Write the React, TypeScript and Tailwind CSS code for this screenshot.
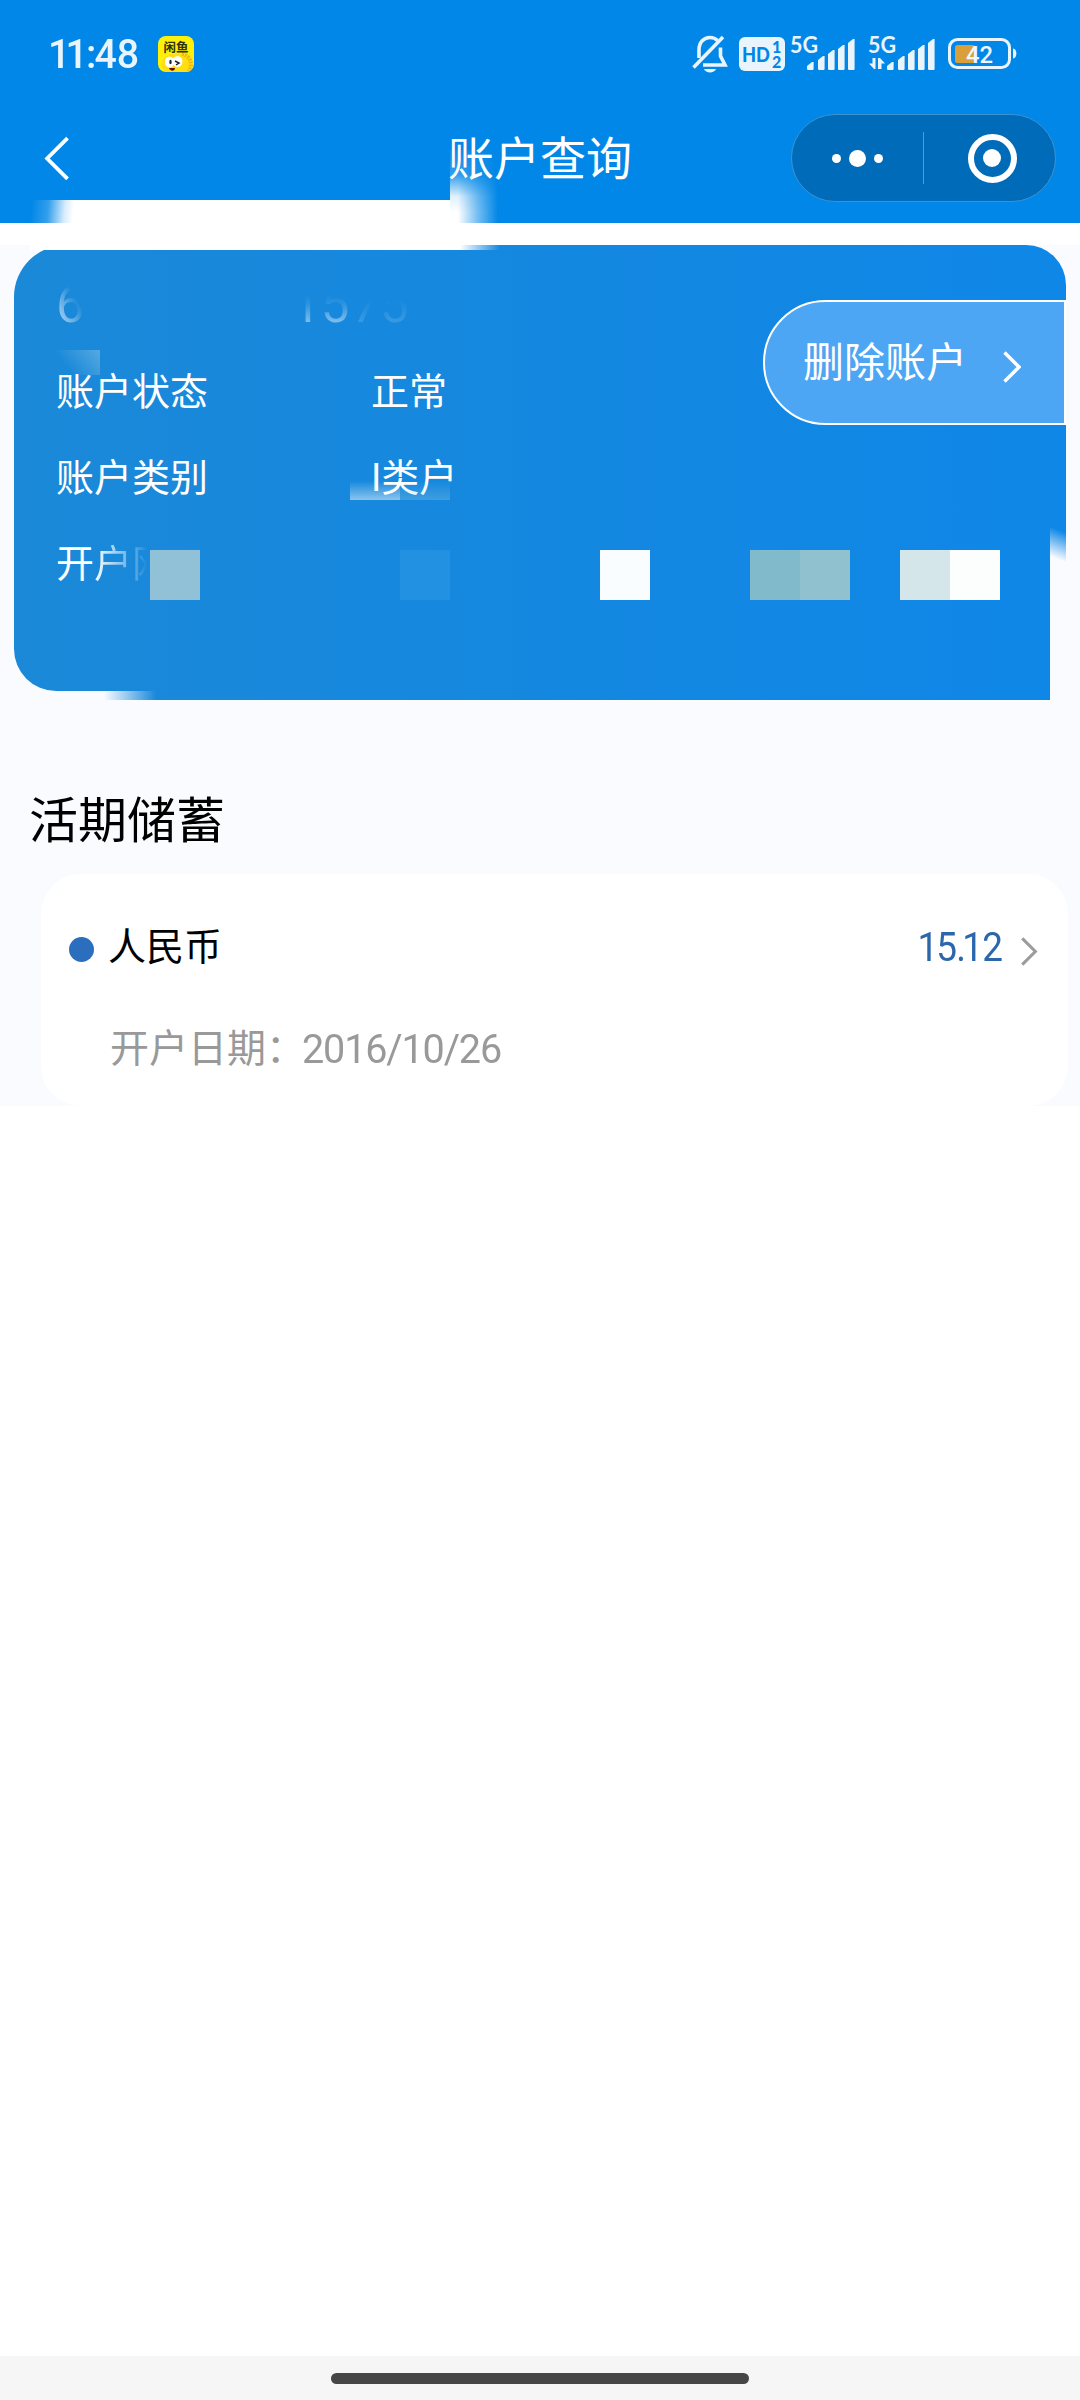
import type { ReactNode } from "react";

const infoRows = [
  { label: "账户状态", value: "正常" },
  { label: "账户类别", value: "I类户" },
];

const signalBars = [
  { x: 0, h: 8 },
  { x: 11, h: 14 },
  { x: 21, h: 20 },
  { x: 31, h: 25 },
  { x: 41, h: 31 },
];

function Chevron({ className, width = 3.4 }: { className: string; width?: number }) {
  return (
    <svg viewBox="0 0 18 32" className={className} fill="none" stroke="currentColor" strokeWidth={width}>
      <path d="M1.5 1.5 L16 16 L1.5 30.5" />
    </svg>
  );
}

function Signal({ arrows }: { arrows?: boolean }) {
  return (
    <svg width="66" height="36" viewBox="0 0 66 36" className="overflow-visible text-[#eaf4fd]" fill="currentColor">
      <text x="-1" y="17" fontSize="22" fontWeight="700" fontFamily="Lato" textLength="28" lengthAdjust="spacingAndGlyphs">
        5G
      </text>
      {arrows && (
        <path d="M3.5 22 h3 v11 h-1.5 L0 27.5 h3.5 Z M9 33 V22 h2 l5 5.5 h-3.5 V33 Z" />
      )}
      {signalBars.map((b) => (
        <path
          key={b.x}
          transform={`translate(${b.x + (arrows ? 18 : 16)} ${34 - b.h})`}
          d={`M0 4 L5 0 H6.6 V${b.h - 1} L6 ${b.h} H0.6 L0 ${b.h - 1} Z`}
        />
      ))}
    </svg>
  );
}

function BellOff() {
  return (
    <svg width="36" height="38" viewBox="0 0 36 38" fill="none" stroke="#eaf4fd" strokeWidth="3.6">
      <path d="M7 23 V15 C7 7 12 2.5 18 2.5 C21 2.5 23.5 3.5 25.5 5.5" />
      <path d="M28.5 12.5 V21 L33 30 H11" />
      <path d="M1.5 32.5 L31 2" />
      <path d="M12 34 H24 C22.5 38.500 13.500 38.500 12 34 Z" fill="#eaf4fd" stroke="none" />
    </svg>
  );
}

function AppBadge() {
  return (
    <svg width="36" height="36" viewBox="0 0 36 36">
      <defs>
        <clipPath id="badge">
          <rect width="36" height="36" rx="8" />
        </clipPath>
      </defs>
      <g clipPath="url(#badge)">
        <rect width="36" height="36" fill="#fdf10b" />
        <path d="M3 30 C3 21 12 16 22 18 C31 19 34 27 32 37 H8 Z" fill="#ffdf10" />
        <path d="M24 18 C34 20 35 30 30 37" fill="none" stroke="#f0b41c" strokeWidth="4" strokeDasharray="2 1" />
        <ellipse cx="11.500" cy="26" rx="4.700" ry="5.500" fill="#fff" />
        <ellipse cx="19.500" cy="25.500" rx="5" ry="5.500" fill="#fff" />
        <ellipse cx="12.500" cy="26" rx="1.200" ry="2.300" fill="#222" />
        <path d="M17 25 L21 27 L18 29" stroke="#222" strokeWidth="1.500" fill="none" />
        <path d="M11 32 H17 C17 35.500 12 35.500 11 32 Z" fill="#6b1008" />
        <text x="5.500" y="15.500" fontSize="12.500" fontWeight="700" fontFamily="Noto Sans CJK SC" fill="#30300c">
          闲鱼
        </text>
      </g>
    </svg>
  );
}

function Battery() {
  return (
    <svg width="70" height="32" viewBox="0 0 70 32">
      <rect x="1.500" y="1.500" width="60" height="28" rx="8" fill="none" stroke="#eaf4fd" strokeWidth="3" />
      <rect x="7" y="7" width="20" height="18" rx="2.500" fill="#d9a03a" />
      <path d="M65 10.500 C69.500 10.500 69.500 20.500 65 20.500 Z" fill="#eaf4fd" />
      <text x="18" y="24.500" fontSize="24" fontWeight="500" fontFamily="Roboto" fill="#eef7ff" textLength="27" lengthAdjust="spacingAndGlyphs">
        42
      </text>
    </svg>
  );
}

function StatusBar() {
  return (
    <div className="flex h-[108px] items-center justify-between pl-[48px] pr-[62px]">
      <div className="flex items-center gap-[20px]">
        <span className="w-[90px] whitespace-nowrap pt-[1px] text-[41px] leading-none font-medium text-[#eaf4fd]">
          <span className="inline-block origin-left scale-x-[0.96]">
            <span className="tracking-[-5px]">1</span>
            <span className="tracking-[-2px]">1:</span>
            <span className="tracking-[0px]">48</span>
          </span>
        </span>
        <AppBadge />
      </div>
      <div className="flex h-[38px] items-center">
        <BellOff />
        <svg width="46" height="34" viewBox="0 0 46 34" className="ml-[11px]">
          <rect width="46" height="34" rx="6" fill="#eaf4fd" />
          <g fill="#0187e7" fontFamily="Lato" fontWeight="900">
            <text x="3" y="24.500" fontSize="20" textLength="28" lengthAdjust="spacingAndGlyphs">HD</text>
            <text x="33" y="16" fontSize="16">1</text>
            <text x="33" y="30.500" fontSize="16">2</text>
          </g>
        </svg>
        <div className="ml-[6px] flex w-[157px] justify-between">
          <Signal />
          <div className="w-[79px]">
            <Signal arrows />
          </div>
        </div>
        <Battery />
      </div>
    </div>
  );
}

function Capsule() {
  return (
    <div className="-mt-px flex h-[88px] w-[265px] items-center rounded-full border border-[#3c93d2] bg-[#006bb8]">
      <div className="flex flex-1 items-center justify-center gap-[8px]">
        <i className="size-[9px] rounded-full bg-white" />
        <i className="size-[17px] rounded-full bg-white" />
        <i className="size-[9px] rounded-full bg-white" />
      </div>
      <div className="h-[52px] w-px bg-[#4b9bd4]" />
      <div className="flex flex-1 items-center justify-center">
        <div className="ml-[5px] flex size-[49px] items-center justify-center rounded-full border-[6px] border-white">
          <i className="size-[18px] rounded-full bg-white" />
        </div>
      </div>
    </div>
  );
}

function InfoRow({ label, children }: { label: ReactNode; children?: ReactNode }) {
  return (
    <div className="flex h-[86px] items-center pt-[2px] text-[38px] leading-none text-white">
      <span className="w-[315px]">{label}</span>
      <span>{children}</span>
    </div>
  );
}

// White smear running along the lower edge of the header
function HeaderSmear() {
  return (
    <svg width="540" height="83" className="absolute left-0 top-[140px]">
      <defs>
        <linearGradient id="smearL" x1="32" x2="74" y1="60" y2="64" gradientUnits="userSpaceOnUse">
          <stop offset="0" stopColor="#fff" stopOpacity="0" />
          <stop offset="0.400" stopColor="#fff" stopOpacity="0.200" />
          <stop offset="0.800" stopColor="#fff" stopOpacity="0.850" />
          <stop offset="1" stopColor="#fff" />
        </linearGradient>
        <linearGradient id="smearR" x1="458" x2="498" y1="0" y2="0" gradientUnits="userSpaceOnUse">
          <stop offset="0" stopColor="#fff" />
          <stop offset="0.500" stopColor="#fff" stopOpacity="0.450" />
          <stop offset="1" stopColor="#fff" stopOpacity="0" />
        </linearGradient>
        <linearGradient id="smearV" x1="0" x2="0" y1="10" y2="72" gradientUnits="userSpaceOnUse">
          <stop offset="0" stopColor="#fff" stopOpacity="0.050" />
          <stop offset="0.400" stopColor="#fff" stopOpacity="0.200" />
          <stop offset="0.750" stopColor="#fff" stopOpacity="0.880" />
          <stop offset="1" stopColor="#fff" />
        </linearGradient>
        <mask id="smearMask">
          <rect x="450" y="10" width="90" height="73" fill="url(#smearV)" />
        </mask>
      </defs>
      <rect x="0" y="60" width="450" height="23" fill="url(#smearL)" />
      <rect x="450" y="10" width="90" height="73" fill="url(#smearR)" mask="url(#smearMask)" />
    </svg>
  );
}

// Blurred and pixelated patches that hide the private part of the card
function CardPatches() {
  return (
    <svg width="1080" height="470" className="absolute left-0 top-0">
      <defs>
        <linearGradient id="p0" x1="460" x2="500" y1="0" y2="0" gradientUnits="userSpaceOnUse">
          <stop offset="0" stopColor="#fff" />
          <stop offset="1" stopColor="#fff" stopOpacity="0" />
        </linearGradient>
        <linearGradient id="p1" x1="72" x2="100" y1="128" y2="105" gradientUnits="userSpaceOnUse">
          <stop offset="0" stopColor="#9fd0e8" stopOpacity="0" />
          <stop offset="1" stopColor="#9fd0e8" stopOpacity="0.450" />
        </linearGradient>
        <linearGradient id="p2" x1="0" x2="0" y1="236" y2="255" gradientUnits="userSpaceOnUse">
          <stop offset="0" stopColor="#fff" stopOpacity="0" />
          <stop offset="1" stopColor="#fff" stopOpacity="0.500" />
        </linearGradient>
        <linearGradient id="p3" x1="0" x2="0" y1="236" y2="255" gradientUnits="userSpaceOnUse">
          <stop offset="0" stopColor="#9fd0e0" stopOpacity="0" />
          <stop offset="1" stopColor="#9fd0e0" stopOpacity="0.300" />
        </linearGradient>
        <linearGradient id="p4" x1="104" x2="156" y1="0" y2="0" gradientUnits="userSpaceOnUse">
          <stop offset="0" stopColor="#f9fbff" />
          <stop offset="1" stopColor="#f9fbff" stopOpacity="0" />
        </linearGradient>
        <linearGradient id="p5" x1="1062" x2="1052" y1="286" y2="312" gradientUnits="userSpaceOnUse">
          <stop offset="0" stopColor="#f9fbff" stopOpacity="0" />
          <stop offset="1" stopColor="#f9fbff" />
        </linearGradient>
      </defs>
      <rect x="30" y="0" width="480" height="5" fill="url(#p0)" />
      <path d="M57 105 H100 V130 H57 Z" fill="url(#p1)" />
      <rect x="350" y="236" width="50" height="19" fill="url(#p2)" />
      <rect x="400" y="236" width="50" height="19" fill="url(#p3)" />
      <g shapeRendering="crispEdges">
        <rect x="150" y="305" width="50" height="50" fill="#90c1d7" />
        <rect x="400" y="305" width="50" height="50" fill="#2391e2" />
        <rect x="600" y="305" width="50" height="50" fill="#fafdff" />
        <rect x="750" y="305" width="50" height="50" fill="#80bacb" />
        <rect x="800" y="305" width="50" height="50" fill="#8fc1cf" />
        <rect x="900" y="305" width="50" height="50" fill="#d5e6eb" />
        <rect x="950" y="305" width="50" height="50" fill="#fcfefe" />
      </g>
      <path d="M13 404 H14 A42 42 0 0 0 56 446 H100 V456 H13 Z" fill="#f9fbff" />
      <rect x="100" y="446" width="60" height="10" fill="url(#p4)" />
      <rect x="1050" y="275" width="18" height="182" fill="url(#p5)" />
    </svg>
  );
}

export default function App() {
  return (
    <div className="flex h-[2400px] w-[1080px] flex-col overflow-hidden bg-white font-['Roboto','Noto_Sans_CJK_SC',sans-serif]">
      {/* Header */}
      <header className="relative h-[223px] bg-[#0187e7]">
        <StatusBar />
        <div className="flex h-[101px] items-center pl-[44px] pr-[24px]">
          <div className="w-[404px]">
            <Chevron className="h-[45px] w-[26px] rotate-180 text-white" width={2.7} />
          </div>
          <h1 className="flex-1 text-[46px] leading-none text-white">账户查询</h1>
          <Capsule />
        </div>
        <HeaderSmear />
      </header>

      <main className="mt-[22px] h-[861px] bg-[#f9fbff]">
        {/* Account card */}
        <section className="relative h-[455px] pl-[14px]">
          <div className="flex h-[455px] w-[1052px] flex-col rounded-tl-[52px] rounded-tr-[40px] bg-linear-to-r from-[#1b89d8] via-[#1488e0] to-[#0f87e8] pl-[42px]">
            <div className="flex h-[103px] items-end pb-[18px] text-[51px] leading-none">
              <span className="mr-[206px] w-[30px] bg-linear-to-tr from-white/80 to-white/0 to-65% bg-clip-text text-transparent">6</span>
              <span className="bg-linear-to-t from-white/60 via-white/10 to-white/0 to-70% bg-clip-text text-transparent">15</span>
              <span className="bg-linear-to-t from-white/20 to-white/0 to-60% bg-clip-text pl-[2px] text-transparent">75</span>
            </div>
            {infoRows.map((row) => (
              <InfoRow key={row.label} label={row.label}>
                {row.value}
              </InfoRow>
            ))}
            <InfoRow
              label={
                <>
                  开
                  <span className="bg-linear-to-r from-white to-white/30 bg-clip-text text-transparent">户</span>
                  <span className="bg-linear-to-r from-white/35 to-white/0 to-40% bg-clip-text text-transparent">网</span>
                </>
              }
            />
          </div>
          <CardPatches />
          <button className="absolute left-[763px] top-[55px] flex h-[125px] w-[303px] items-center justify-between rounded-l-full border-2 border-white bg-[#4da6f3] pl-[38px] pr-[43px] text-[41px] leading-none text-white">
            <span className="pt-[2px]">删除账户</span>
            <Chevron className="mt-[8px] h-[32px] w-[18px]" />
          </button>
        </section>

        {/* Savings */}
        <h2 className="flex h-[174px] items-end pb-[28px] pl-[29px] text-[49px] leading-none text-black">活期储蓄</h2>
        <section className="ml-[41px] flex h-[232px] w-[1027px] flex-col rounded-[40px] bg-white pl-[28px] pr-[30px]">
          <div className="flex h-[144px] items-center">
            <i className="mt-[6px] size-[25px] rounded-full bg-[#2b6ebd]" />
            <span className="pl-[14px] pt-[2px] text-[38px] leading-none text-black">人民币</span>
            <span className="ml-auto flex origin-right scale-x-[0.9] pt-[2px] text-[41px] leading-none text-[#2c67ab]">
              <span className="tracking-[-2px]">1</span>
              <span className="tracking-[-1px]">5</span>
              <span className="tracking-[-4px]">.</span>
              <span className="tracking-[-1px]">12</span>
            </span>
            <Chevron className="ml-[18px] mt-[10px] h-[29px] w-[18px] text-[#9c9c9c]" />
          </div>
          <div className="flex h-[60px] items-center pl-[41px] pt-[3px] text-[39px] leading-none text-[#999]">
            <span>开户日期：</span>
            <span className="-ml-[3px] origin-left scale-x-[0.965] text-[41px] tracking-[-1.2px]">2016/10/26</span>
          </div>
        </section>
      </main>

      {/* Gesture bar */}
      <footer className="mt-auto flex h-[44px] justify-center bg-[#f6f6f6] pt-[17px]">
        <div className="h-[11px] w-[418px] rounded-full bg-[#464646]" />
      </footer>
    </div>
  );
}
